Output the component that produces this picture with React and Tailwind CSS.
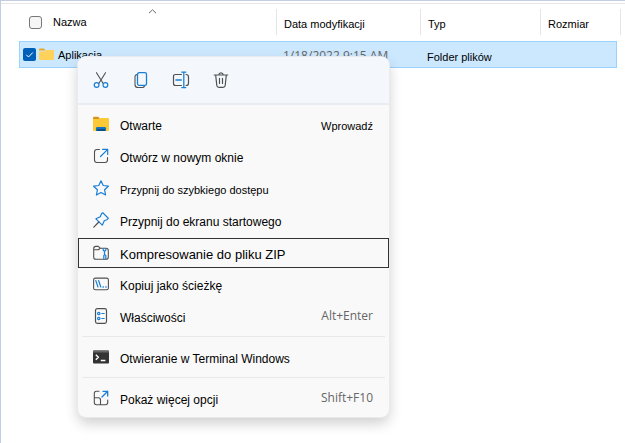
import React from "react";

const GREY = "#505050";
const BLUE = "#1a7fd4";

function Icon({ children, size = 16 }) {
  return (
    <svg width={size} height={size} viewBox={`0 0 ${size} ${size}`} fill="none" stroke={GREY} strokeWidth="1.1" strokeLinecap="round" strokeLinejoin="round" aria-hidden="true">
      {children}
    </svg>
  );
}

const CutIcon = () => (
  <Icon>
    <path d="M3.5 .7 10.2 11.5M12.5 .7 5.8 11.5" />
    <circle cx="3.6" cy="13" r="2.4" stroke={BLUE} strokeWidth="1.2" />
    <circle cx="12.4" cy="13" r="2.4" stroke={BLUE} strokeWidth="1.2" />
  </Icon>
);

const CopyIcon = () => (
  <Icon>
    <path d="M3.6 2.6Q2 3 2 4.6V12.5Q2 15.5 5 15.5H9.5Q11 15.5 11.5 14" />
    <rect x="4.5" y=".7" width="9" height="12.6" rx="1.6" stroke={BLUE} strokeWidth="1.3" />
  </Icon>
);

const RenameIcon = () => (
  <Icon size={18}>
    <path d="M9.5 3.5H3.5Q1.5 3.5 1.5 5.5V12.5Q1.5 14.5 3.5 14.5H9.5M14 3.5Q16.5 3.5 16.5 5.8V12.2Q16.5 14.5 14 14.5" strokeWidth="1.2" />
    <path d="M4 9H9.2" stroke={BLUE} strokeWidth="1.6" />
    <path d="M11.8 1.5V16.5M9.8 1.2H13.8M9.8 16.6H13.8" stroke={BLUE} strokeWidth="1.3" />
  </Icon>
);

const DeleteIcon = () => (
  <Icon>
    <path d="M1.2 3H14.8M5.8 2.8Q6 .8 8 .8T10.2 2.8M2.7 3.2 3.8 13.5Q4 15.4 6 15.4H10Q12 15.4 12.2 13.5L13.3 3.2M6.5 6.4V11.5M9.5 6.4V11.5" strokeWidth="1.2" />
  </Icon>
);

const OpenIcon = () => (
  <Icon>
    <g stroke="none">
      <path d="M0 2Q0 .8 1.2 .8H5.3L7 3H0Z" fill="#d9951b" />
      <path d="M0 3H6L7.5 2H15Q16 2 16 3V14Q16 15 15 15H1Q0 15 0 14Z" fill="#fdc936" />
      <path d="M3 12.2Q3 11 4.2 11H11.8Q13 11 13 12.2V15H3Z" fill="#1673be" />
      <path d="M4 13H12V15H4Z" fill="#0c5088" />
    </g>
  </Icon>
);

const NewWindowIcon = () => (
  <Icon>
    <path d="M6.5 1.5H4Q1.5 1.5 1.5 4V12Q1.5 14.5 4 14.5H12Q14.5 14.5 14.5 12V9.5" />
    <path d="M7.5 8.5 14.7 1.3M9.5 1.3H14.7V6.5" stroke={BLUE} strokeWidth="1.2" />
  </Icon>
);

const StarIcon = () => (
  <Icon>
    <path d="M8 .8 10.2 5.5 15.4 6.2 11.6 9.8 12.6 15 8 12.5 3.4 15 4.4 9.8 .6 6.2 5.8 5.5Z" stroke={BLUE} strokeWidth="1.2" />
  </Icon>
);

const PinIcon = () => (
  <Icon>
    <path d="M9.8 .8 15.3 6.2 14.3 7.5 11.3 8.7 9.3 13.2 2.9 6.8 7.3 4.8 8.6 1.6Z" stroke={BLUE} strokeWidth="1.2" />
    <path d="M5.8 10 .8 15.2" strokeWidth="1.2" />
  </Icon>
);

const ZipIcon = () => (
  <Icon>
    <path d="M.7 4.8V3.5Q.7 1.4 2.8 1.4H5.3L7.3 3.2H13Q15.3 3.2 15.3 5.4V12Q15.3 14.3 13 14.3H3Q.7 14.3 .7 12V4.8H5.3L7.3 3.2" />
    <path d="M10.2 3.7V5.2L11.5 6.5V9.5L10.8 10.5V13.8M12.8 3.7V5.2L11.5 6.5M11.5 9.5 12.8 10.5V13.8" stroke={BLUE} strokeWidth="1.2" />
  </Icon>
);

const PathIcon = () => (
  <Icon>
    <rect x=".6" y="2.1" width="14.8" height="11.6" rx="1.8" />
    <path d="M2.8 4.5 5 11M5.6 4.5 7.8 11" stroke={BLUE} strokeWidth="1.2" />
    <path d="M10 11H10.4M12.8 11H13.2" stroke={BLUE} strokeWidth="1.3" />
  </Icon>
);

const PropertiesIcon = () => (
  <Icon>
    <rect x="2.5" y=".6" width="11" height="14.8" rx="1.8" strokeWidth="1.2" />
    <path d="M8.8 5.5H11.2M8.8 10.5H11.2" stroke={BLUE} />
    <circle cx="5.8" cy="5.5" r="1.2" stroke={BLUE} strokeWidth="1.2" />
    <circle cx="5.8" cy="10.5" r="1.2" stroke={BLUE} strokeWidth="1.2" />
  </Icon>
);

const TerminalIcon = () => (
  <Icon>
    <rect x="0" y="1.5" width="16" height="13" rx="1" fill="#333" stroke="none" />
    <path d="M0 3.5V2.5Q0 1.5 1 1.5H15Q16 1.5 16 2.5V3.5Z" fill="#666" stroke="none" />
    <path d="M2.8 5.8 5.4 8.3 2.8 10.8M7.8 11.5H12.4" stroke="#fff" strokeWidth="1.4" strokeLinecap="butt" />
  </Icon>
);

const MoreIcon = () => (
  <Icon>
    <path d="M6 1.3H3.5Q1.3 1.3 1.3 3.5V12.5Q1.3 14.7 3.5 14.7H12.5Q14.7 14.7 14.7 12.5V10M1.5 7.8H5.3Q7.5 7.8 7.5 10V14.5" />
    <path d="M9 7 14.7 1.3M10 1.3H14.7V6" stroke={BLUE} strokeWidth="1.3" />
  </Icon>
);

const tools = [
  { label: "Wytnij", icon: CutIcon },
  { label: "Kopiuj", icon: CopyIcon },
  { label: "Zmień nazwę", icon: RenameIcon },
  { label: "Usuń", icon: DeleteIcon },
];

const groups = [
  [
    { label: "Otwarte", icon: OpenIcon, hint: "Wprowadź", dark: true },
    { label: "Otwórz w nowym oknie", icon: NewWindowIcon },
    { label: "Przypnij do szybkiego dostępu", icon: StarIcon, small: true },
    { label: "Przypnij do ekranu startowego", icon: PinIcon },
    { label: "Kompresowanie do pliku ZIP", icon: ZipIcon, active: true },
    { label: "Kopiuj jako ścieżkę", icon: PathIcon },
    { label: "Właściwości", icon: PropertiesIcon, hint: "Alt+Enter" },
  ],
  [{ label: "Otwieranie w Terminal Windows", icon: TerminalIcon }],
  [{ label: "Pokaż więcej opcji", icon: MoreIcon, hint: "Shift+F10" }],
];

function MenuItem({ item }) {
  const Glyph = item.icon;
  const frame = item.active ? "mt-0.5 h-[30px] border-[#333] text-[13px]" : "h-8 border-transparent";
  const size = item.active ? "" : item.small ? "text-[11px]" : "text-[12px]";
  return (
    <button type="button" role="menuitem" className={`flex w-full items-center border pr-[15px] pl-[14px] text-left ${frame} ${size}`}>
      <Glyph />
      <span className="ml-[11px] flex-1 pt-[3px] whitespace-nowrap">{item.label}</span>
      {item.hint && (
        <span className={item.dark ? "pt-[3px] text-[11px]" : "font-['Open_Sans','Noto_Sans',sans-serif] text-[12px] text-[#666]"}>
          {item.hint}
        </span>
      )}
    </button>
  );
}

function ContextMenu() {
  return (
    <div role="menu" className="absolute top-14 left-[77px] w-[311px] overflow-hidden rounded-lg bg-[#f9f9f9] pb-[3px] shadow-[0_0_0_1px_#e8eaed,0_6px_14px_rgba(0,0,0,0.2)]">
      <div className="mb-[3px] flex h-12 items-center gap-4 border-b-2 border-[#e9ecf0] bg-[#f4f8fc] px-[11px]">
        {tools.map(({ label, icon: Glyph }) => (
          <button key={label} type="button" aria-label={label} className="flex size-6 items-center justify-center">
            <Glyph />
          </button>
        ))}
      </div>
      {groups.map((items, i) => (
        <React.Fragment key={i}>
          {i > 0 && <hr className="mx-1 my-1 border-[#e9e9e9]" />}
          {items.map((item) => (
            <MenuItem key={item.label} item={item} />
          ))}
        </React.Fragment>
      ))}
    </div>
  );
}

const Folder = () => (
  <svg width="15" height="13" viewBox="0 0 15 13" aria-hidden="true">
    <path d="M0 1.5Q0 .5 1 .5H5L6.5 2.5H0Z" fill="#e8a820" />
    <path d="M0 3.5H5.5L7 2H14Q15 2 15 3V11Q15 12 14 12H1Q0 12 0 11Z" fill="#ffd35b" />
  </svg>
);

const headCell = "border-l border-[#e5e5e5] pl-[7px] pt-1 h-[26px] flex items-center";
const bodyCell = "h-[27px] border-y border-[#99d1ff] bg-[#cce8ff] p-0 pl-[7px]";

export default function App() {
  return (
    <main className="relative min-h-screen border-t border-l border-[#c3cce2] bg-white font-['Liberation_Sans',Arial,sans-serif] text-[11px] leading-4 text-black">
      <div className="h-[3px] border-b border-[#e5e5e5]" />
      <div className="pt-[5px] pr-1 pl-[18px]">
        <table className="w-full table-fixed border-separate border-spacing-0 text-left whitespace-nowrap">
          <colgroup>
            <col className="w-[257px]" />
            <col className="w-[144px]" />
            <col className="w-[120px]" />
            <col />
            <col className="w-1" />
          </colgroup>
          <thead>
            <tr>
              <th className="relative p-0 pb-[6px] font-normal">
                <div className="flex h-[26px] items-center gap-[11px] pl-[10px]">
                  <input type="checkbox" aria-label="Zaznacz wszystko" className="size-[13px] appearance-none rounded-[3px] border border-[#777] bg-[#f6f6f6]" />
                  <span>Nazwa</span>
                </div>
                <svg className="absolute top-0 left-[129px]" width="9" height="5" viewBox="0 0 9 5" fill="none" stroke="#666" aria-hidden="true">
                  <path d="M1 4.2 4.5 .8 8 4.2" />
                </svg>
              </th>
              <th className="p-0 pb-[6px] font-normal"><div className={headCell}>Data modyfikacji</div></th>
              <th className="p-0 pb-[6px] font-normal"><div className={headCell}>Typ</div></th>
              <th className="p-0 pb-[6px] font-normal"><div className={headCell}>Rozmiar</div></th>
              <th className="p-0 pb-[6px] font-normal"><div className="h-[26px] border-r border-[#e5e5e5]" /></th>
            </tr>
          </thead>
          <tbody>
            <tr>
              <td className="h-[27px] border-y border-l border-[#99d1ff] bg-[#cce8ff] p-0">
                <label className="flex items-center pl-[3px]">
                  <span className="relative flex">
                    <input type="checkbox" defaultChecked className="size-[13px] appearance-none rounded-[2px] bg-[#005fb8]" />
                    <svg className="pointer-events-none absolute inset-0" width="13" height="13" viewBox="0 0 13 13" fill="none" stroke="#fff" aria-hidden="true">
                      <path d="M3.3 6.8 5.5 9 9.8 4.5" />
                    </svg>
                  </span>
                  <span className="ml-[3px]"><Folder /></span>
                  <span className="ml-1">Aplikacja</span>
                </label>
              </td>
              <td className={`${bodyCell} pt-0.5 font-['Open_Sans','Noto_Sans',sans-serif] text-[12px] text-[#666]`}>1/18/2022 9:15 AM</td>
              <td className={`${bodyCell} pt-1`}>Folder plików</td>
              <td className={`${bodyCell} border-r`} />
              <td className="p-0" />
            </tr>
          </tbody>
        </table>
      </div>
      <ContextMenu />
    </main>
  );
}
